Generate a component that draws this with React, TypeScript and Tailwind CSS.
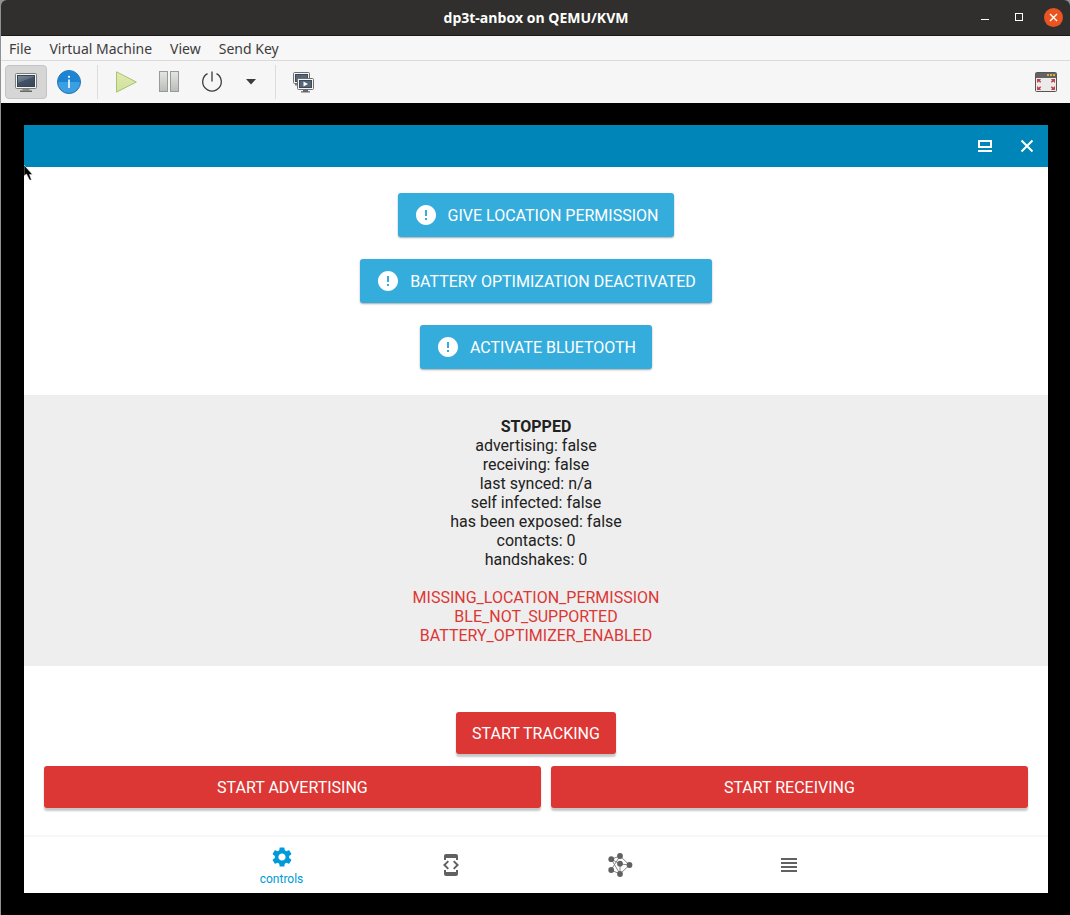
import type { ReactNode } from "react";
import { MdDeveloperMode, MdError, MdSettings, MdViewHeadline } from "react-icons/md";

const menus = ["File", "Virtual Machine", "View", "Send Key"];

const permissions = [
  "GIVE LOCATION PERMISSION",
  "BATTERY OPTIMIZATION DEACTIVATED",
  "ACTIVATE BLUETOOTH",
];

const status = [
  "advertising: false",
  "receiving: false",
  "last synced: n/a",
  "self infected: false",
  "has been exposed: false",
  "contacts: 0",
  "handshakes: 0",
];

const errors = ["MISSING_LOCATION_PERMISSION", "BLE_NOT_SUPPORTED", "BATTERY_OPTIMIZER_ENABLED"];

function ToolButton({ label, active, children }: { label: string; active?: boolean; children: ReactNode }) {
  return (
    <button
      type="button"
      aria-label={label}
      className={
        active
          ? "flex h-[34px] w-[42px] items-center justify-center rounded border border-[#c4c4c4] bg-[#d6d6d6]"
          : "flex h-[34px] w-[42px] items-center justify-center rounded"
      }
    >
      {children}
    </button>
  );
}

function ToolSeparator() {
  return <div className="mx-1.5 h-[34px] w-px bg-[#dcdcdc]" />;
}

function MonitorIcon() {
  return (
    <svg width="24" height="24" viewBox="0 0 24 24">
      <defs>
        <linearGradient id="screen" x1="0" y1="0" x2="0.6" y2="1">
          <stop offset="0" stopColor="#7f8fa2" />
          <stop offset="0.5" stopColor="#5c6b7d" />
          <stop offset="0.52" stopColor="#435268" />
          <stop offset="1" stopColor="#3c4a5e" />
        </linearGradient>
      </defs>
      <rect x="1.5" y="3.5" width="21" height="15" rx="1.2" fill="#f4f4f2" stroke="#7c7e7e" />
      <rect x="3.5" y="5.5" width="17" height="11" fill="url(#screen)" stroke="#3a4552" />
      <path d="M8.500 19h7v1.500h-7z" fill="#8b8d8b" />
      <path d="M6 20.500h12v1.500h-12z" fill="#666866" />
    </svg>
  );
}

function InfoIcon() {
  return (
    <svg width="26" height="26" viewBox="0 0 26 26">
      <circle cx="13" cy="13" r="11.500" fill="#3b9fe2" stroke="#2374b0" />
      <path d="M2 13a11 11 0 0 1 22 0z" fill="#1b84d4" />
      <circle cx="13" cy="7.800" r="1.100" fill="#fff" />
      <path d="M12.200 10.500h1.600v8.500h-1.600z" fill="#fff" />
    </svg>
  );
}

function PlayIcon() {
  return (
    <svg width="24" height="24" viewBox="0 0 24 24">
      <defs>
        <linearGradient id="play" x1="0" y1="0" x2="0" y2="1">
          <stop offset="0" stopColor="#e1eab4" />
          <stop offset="1" stopColor="#cfe296" />
        </linearGradient>
      </defs>
      <path d="M2.500 1.800v20.400L22.300 12z" fill="url(#play)" stroke="#a9c274" />
    </svg>
  );
}

function PauseIcon() {
  return (
    <svg width="24" height="24" viewBox="0 0 24 24">
      <defs>
        <linearGradient id="pause" x1="0" y1="0" x2="0" y2="1">
          <stop offset="0" stopColor="#e4e6e2" />
          <stop offset="1" stopColor="#b9bdb7" />
        </linearGradient>
      </defs>
      <rect x="2.500" y="1.500" width="8" height="20" fill="url(#pause)" stroke="#979a96" />
      <rect x="13.500" y="1.500" width="8" height="20" fill="url(#pause)" stroke="#979a96" />
    </svg>
  );
}

function PowerIcon() {
  return (
    <svg width="24" height="24" viewBox="0 0 24 24" fill="none" stroke="#3b3b3b" strokeWidth="1.300">
      <path d="M7.500 3.600a9.300 9.300 0 1 0 9 0" />
      <path d="M12 1.500v10" />
    </svg>
  );
}

function SnapshotsIcon() {
  return (
    <svg width="24" height="24" viewBox="0 0 24 24">
      <rect x="1.500" y="2.500" width="16" height="11" rx="1" fill="#f4f4f2" stroke="#6e7070" />
      <rect x="3.500" y="4.500" width="12" height="7" fill="#56677a" stroke="#3d4957" />
      <path d="M3 14h3v1.500h-3z" fill="#777" />
      <rect x="5.500" y="8.500" width="16" height="11" rx="1" fill="#f4f4f2" stroke="#6e7070" />
      <rect x="7.500" y="10.500" width="12" height="7" fill="#56677a" stroke="#3d4957" />
      <path d="M11.500 11.500v5l4.500-2.500z" fill="#fff" />
      <path d="M11 20h5v1.200h-5zM9 21.200h9v1.300h-9z" fill="#666866" />
    </svg>
  );
}

function FullscreenIcon() {
  return (
    <svg width="24" height="24" viewBox="0 0 24 24">
      <rect x="1.500" y="2.500" width="21" height="19" rx="1" fill="#ebebeb" stroke="#555" />
      <path d="M2 3h20v5h-20z" fill="#626262" />
      <path d="M13 4h2v2h-2zM16 4h2v2h-2zM19 4h2v2h-2z" fill="#dfae3c" />
      <path
        d="M3 9h4l-1 1.500 1.200 1.300-1 1-1.500-1.200L3 13zM21 9h-4l1 1.500-1.200 1.300 1 1 1.500-1.200L21 13zM3 20h4l-1-1.500 1.200-1.300-1-1-1.500 1.200L3 16zM21 20h-4l1-1.500-1.200-1.300 1-1 1.500 1.200L21 16z"
        fill="#c5424a"
      />
    </svg>
  );
}

function NetworkIcon() {
  return (
    <svg width="26" height="26" viewBox="0 0 26 26" fill="#616161">
      <path
        d="M4.300 7.200 13 4l9.500 9L13 22l-9-4L13 4M4.300 7.200 13 12l9.500 1M13 12v10L4.300 7.200"
        fill="none"
        stroke="#7d7d7d"
        strokeWidth="0.900"
      />
      <circle cx="4.300" cy="7.200" r="2.900" />
      <circle cx="13" cy="4" r="2.900" />
      <circle cx="13" cy="11.700" r="2.900" />
      <circle cx="22.500" cy="13" r="2.900" />
      <circle cx="4.200" cy="18" r="2.900" />
      <circle cx="13" cy="22" r="2.900" />
    </svg>
  );
}

function TitleBar() {
  return (
    <header className="grid h-9 grid-cols-[1fr_auto_1fr] items-center rounded-t-md border-b border-[#1c1b1a] bg-[#302f2d] pr-[7px]">
      <h1 className="col-start-2 pl-2 font-['Open_Sans'] text-sm font-bold text-white">dp3t-anbox on QEMU/KVM</h1>
      <div className="flex items-center justify-end gap-[15px]">
        <button type="button" aria-label="Minimize" className="flex size-[19px] items-center justify-center">
          <svg width="9" height="9" viewBox="0 0 9 9">
            <path d="M0 6h8v1h-8z" fill="#fff" />
          </svg>
        </button>
        <button type="button" aria-label="Maximize" className="flex size-[19px] items-center justify-center">
          <svg width="9" height="9" viewBox="0 0 9 9">
            <rect x="0.500" y="0.500" width="7" height="7" fill="none" stroke="#fff" />
          </svg>
        </button>
        <button
          type="button"
          aria-label="Close window"
          className="flex size-[19px] items-center justify-center rounded-full bg-[#e95420]"
        >
          <svg width="9" height="9" viewBox="0 0 9 9">
            <path d="m1 1 7 7M8 1 1 8" stroke="#fff" strokeWidth="1.400" />
          </svg>
        </button>
      </div>
    </header>
  );
}

function Toolbar() {
  return (
    <div className="flex h-[42px] items-center gap-px bg-[#f6f6f6] pr-[3px] pl-1">
      <ToolButton label="Show the graphical console" active>
        <MonitorIcon />
      </ToolButton>
      <ToolButton label="Show virtual hardware details">
        <InfoIcon />
      </ToolButton>
      <ToolSeparator />
      <ToolButton label="Run">
        <PlayIcon />
      </ToolButton>
      <ToolButton label="Pause">
        <PauseIcon />
      </ToolButton>
      <ToolButton label="Shut down">
        <PowerIcon />
      </ToolButton>
      <button type="button" aria-label="Shut down options" className="flex h-[34px] w-[34px] items-center justify-center">
        <svg width="10" height="6" viewBox="0 0 10 6">
          <path d="M0 0h10L5 5.500z" fill="#3b3b3b" />
        </svg>
      </button>
      <ToolSeparator />
      <ToolButton label="Manage snapshots">
        <SnapshotsIcon />
      </ToolButton>
      <div className="ml-auto">
        <ToolButton label="Switch to fullscreen">
          <FullscreenIcon />
        </ToolButton>
      </div>
    </div>
  );
}

function ActionButton({ children, grow }: { children: string; grow?: boolean }) {
  return (
    <button
      type="button"
      className={
        grow
          ? "h-[42px] flex-auto rounded-[3px] bg-[#dc3735] px-4 pt-0.5 text-white shadow-[0_3px_2px_rgba(0,0,0,0.22)]"
          : "h-[42px] rounded-[3px] bg-[#dc3735] px-4 pt-0.5 text-white shadow-[0_3px_2px_rgba(0,0,0,0.22)]"
      }
    >
      {children}
    </button>
  );
}

function GuestApp() {
  return (
    <section className="relative flex flex-1 flex-col bg-white font-[Roboto,sans-serif] text-base">
      <div className="flex h-[42px] shrink-0 items-center justify-end gap-[18px] bg-[#0085b8] pr-[9px] text-white">
        <button type="button" aria-label="Restore app window" className="flex size-6 items-center justify-center">
          <svg width="14" height="12" viewBox="0 0 14 12" fill="#fff">
            <path d="M0 0h14v8H0zM2 2v4h10V2z" fillRule="evenodd" />
            <path d="M0 10h14v2H0z" />
          </svg>
        </button>
        <button type="button" aria-label="Close app" className="flex size-6 items-center justify-center">
          <svg width="14" height="14" viewBox="0 0 14 14">
            <path d="m1.500 1.500 11 11M12.500 1.500l-11 11" stroke="#fff" strokeWidth="2" />
          </svg>
        </button>
      </div>

      <svg width="12" height="18" viewBox="0 0 12 18" className="absolute top-10 left-0">
        <path
          d="M0 0v11l2.500-2L5.500 15H7.500L5.500 9.500H8.500z"
          fill="#000"
          stroke="#fff"
          strokeWidth="0.500"
        />
      </svg>

      <div className="flex flex-col items-center gap-[22px] py-[26px]">
        {permissions.map((label) => (
          <button
            key={label}
            type="button"
            className="flex h-11 items-center gap-2.5 rounded-[3px] bg-[#35addc] px-4 text-white shadow-[0_1px_2px_rgba(0,0,0,0.35)]"
          >
            <MdError size={24} />
            <span className="pt-0.5">{label}</span>
          </button>
        ))}
      </div>

      <div className="bg-[#eeeeee] pt-[22px] pb-[21px] text-center leading-[19px] text-[#212121]">
        <p className="font-bold">STOPPED</p>
        {status.map((line) => (
          <p key={line}>{line}</p>
        ))}
        <div className="mt-[19px] text-[#dc3735]">
          {errors.map((line) => (
            <p key={line}>{line}</p>
          ))}
        </div>
      </div>

      <div className="flex flex-1 flex-col items-center gap-3 px-5 pt-[46px] pb-[27px]">
        <ActionButton>START TRACKING</ActionButton>
        <div className="flex gap-2.5 self-stretch">
          <ActionButton grow>START ADVERTISING</ActionButton>
          <ActionButton grow>START RECEIVING</ActionButton>
        </div>
      </div>

      <nav className="flex h-[58px] shrink-0 justify-center border-t-2 border-[#f7f7f7] pr-0.5 text-[#616161]">
        <div className="grid w-full max-w-[676px] grid-cols-4">
          <button type="button" className="flex flex-col items-center pt-2 text-xs text-[#0099d9]">
            <MdSettings size={24} />
            <span className="pt-[2px]">controls</span>
          </button>
          <button type="button" aria-label="Parameters" className="flex items-center justify-center">
            <MdDeveloperMode size={24} />
          </button>
          <button type="button" aria-label="Handshakes" className="flex items-center justify-center">
            <NetworkIcon />
          </button>
          <button type="button" aria-label="Logs" className="flex items-center justify-center">
            <MdViewHeadline size={24} />
          </button>
        </div>
      </nav>
    </section>
  );
}

export default function App() {
  return (
    <div className="flex min-h-screen flex-col border-l border-[#8e9292] bg-[#8e9292]">
      <TitleBar />
      <div className="flex h-[25px] items-center gap-[18px] border-b border-[#dadada] bg-[#f7f7f7] px-2 pt-0.5 font-['Noto_Sans'] text-sm text-[#3d3d3d]">
        {menus.map((menu) => (
          <button key={menu} type="button">
            {menu}
          </button>
        ))}
      </div>
      <Toolbar />
      <main className="flex flex-1 flex-col bg-black pt-[22px] pr-[22px] pb-[22px] pl-[23px]">
        <GuestApp />
      </main>
    </div>
  );
}
